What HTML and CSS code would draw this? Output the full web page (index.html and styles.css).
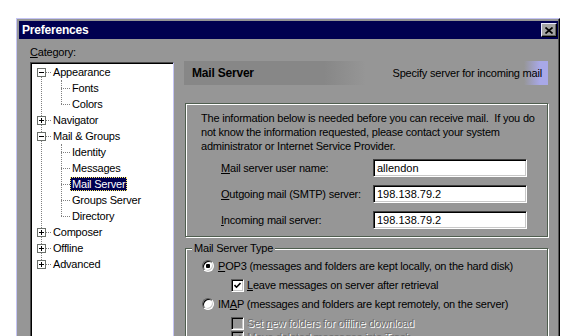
FILE: index.html
```html
<!DOCTYPE html>
<html lang="en">
<head>
    <meta charset="UTF-8">
    <meta name="viewport" content="width=device-width, initial-scale=1.0">
    <title>Preferences</title>
    <link rel="stylesheet" href="styles.css">
</head>
<body>
    <div class="window">
        <div class="titlebar">
            <span class="title">Preferences</span>
            <button class="close">
                <svg width="8" height="7" viewBox="0 0 8 7"><path d="M0.5 0.5l7 6M7.5 0.5l-7 6" stroke="#000" stroke-width="1.7"/></svg>
            </button>
        </div>
        <div class="content">
            <div class="sidebar">
                <div class="cat-label"><u>C</u>ategory:</div>
                <div class="tree-box">
                    <ul class="tree">
                        <li>
                            <div class="row"><span class="toggle"></span><span class="hline"></span><span class="label">Appearance</span></div>
                            <ul class="sub">
                                <li class="row child"><span class="hline"></span><span class="label">Fonts</span></li>
                                <li class="row child"><span class="hline"></span><span class="label">Colors</span></li>
                            </ul>
                        </li>
                        <li><div class="row"><span class="toggle closed"></span><span class="hline"></span><span class="label">Navigator</span></div></li>
                        <li>
                            <div class="row"><span class="toggle"></span><span class="hline"></span><span class="label">Mail &amp; Groups</span></div>
                            <ul class="sub">
                                <li class="row child"><span class="hline"></span><span class="label">Identity</span></li>
                                <li class="row child"><span class="hline"></span><span class="label">Messages</span></li>
                                <li class="row child"><span class="hline"></span><span class="label selected">Mail Server</span></li>
                                <li class="row child"><span class="hline"></span><span class="label">Groups Server</span></li>
                                <li class="row child"><span class="hline"></span><span class="label">Directory</span></li>
                            </ul>
                        </li>
                        <li><div class="row"><span class="toggle closed"></span><span class="hline"></span><span class="label">Composer</span></div></li>
                        <li><div class="row"><span class="toggle closed"></span><span class="hline"></span><span class="label">Offline</span></div></li>
                        <li><div class="row"><span class="toggle closed"></span><span class="hline"></span><span class="label">Advanced</span></div></li>
                    </ul>
                </div>
            </div>

            <div class="panel">
                <div class="panel-head">
                    <span class="panel-title">Mail Server</span>
                    <span class="panel-desc">Specify server for incoming mail</span>
                </div>

                <div class="group">
                    <p class="info">The information below is needed before you can receive mail.&nbsp; If you do<br>not know the information requested, please contact your system<br>administrator or Internet Service Provider.</p>
                    <div class="fields">
                        <div class="field"><label for="user"><u>M</u>ail server user name:</label><input id="user" type="text" value="allendon"></div>
                        <div class="field"><label for="smtp"><u>O</u>utgoing mail (SMTP) server:</label><input id="smtp" type="text" value="198.138.79.2"></div>
                        <div class="field"><label for="pop"><u>I</u>ncoming mail server:</label><input id="pop" type="text" value="198.138.79.2"></div>
                    </div>
                </div>

                <fieldset class="group type-group">
                    <legend>Mail Server Type</legend>
                    <div class="opt opt-pop"><span class="radio on"></span><span><u>P</u>OP3 (messages and folders are kept locally, on the hard disk)</span></div>
                    <div class="opt sub-opt"><span class="check"><svg width="7" height="7" viewBox="0 0 7 7"><path d="M0.5 3l2 2.2L6.5 1" stroke="#000" stroke-width="1.6" fill="none"/></svg></span><span><u>L</u>eave messages on server after retrieval</span></div>
                    <div class="opt"><span class="radio"></span><span>IM<u>A</u>P (messages and folders are kept remotely, on the server)</span></div>
                    <div class="opt sub-opt disabled"><span class="check"></span><span>Set <u>n</u>ew folders for offline download</span></div>
                    <div class="opt sub-opt disabled tight"><span class="check"><svg width="7" height="7" viewBox="0 0 7 7"><path d="M0.5 3l2 2.2L6.5 1" stroke="#6f6f6f" stroke-width="1.6" fill="none"/></svg></span><span>Move deleted messages into Trash</span></div>
                </fieldset>
            </div>
        </div>
    </div>
</body>
</html>
```

FILE: styles.css
```css
body {
    margin: 0;
    height: 336px;
    overflow: hidden;
    background: #fff;
    font-family: 'Liberation Sans', Arial, sans-serif;
    font-size: 11px;
    letter-spacing: -0.2px;
    color: #000;
}

.window {
    margin: 18px 0 0 16px;
    width: 544px;
    height: 340px;
    box-sizing: border-box;
    padding: 2px 1px 0 2px;
    background: #969696;
    border: 1px solid;
    border-color: #c4c4f4 #000 #000 #c4c4f4;
    box-shadow: inset -1px -1px #555;
}

.titlebar {
    height: 18px;
    background: #000050;
    display: flex;
    align-items: center;
    justify-content: space-between;
    padding: 0 1px 0 3px;
}

.title {
    color: #fff;
    font-weight: bold;
    font-size: 12px;
}

.close {
    width: 16px;
    height: 14px;
    padding: 0;
    display: flex;
    align-items: center;
    justify-content: center;
    background: #a4a4a4;
    border: 1px solid;
    border-color: #e8e8ff #000 #000 #e8e8ff;
    box-shadow: inset -1px -1px #666;
}

.content {
    display: flex;
    gap: 10px;
    padding: 0 9px 0 11px;
}

/* category tree */
.sidebar {
    width: 144px;
    flex: none;
}

.cat-label {
    margin-top: 6px;
    line-height: 14px;
}

.tree-box {
    margin-top: 3px;
    height: 300px;
    background: #fff;
    border: 1px solid;
    border-color: #4a4a4a #c4c4f4 #c4c4f4 #4a4a4a;
    box-shadow: inset 1px 1px #000;
    padding: 1px 0 0 1px;
}

.tree, .sub {
    list-style: none;
    margin: 0;
    padding: 0;
    position: relative;
}

.tree::before {
    content: "";
    position: absolute;
    left: 9px;
    top: 8px;
    height: 192px;
    border-left: 1px dotted #808080;
}

.sub::before {
    content: "";
    position: absolute;
    left: 29px;
    top: 0;
    height: calc(100% - 8px);
    border-left: 1px dotted #808080;
}

.row {
    display: flex;
    align-items: center;
    height: 16px;
    padding-left: 5px;
}

.row.child {
    padding-left: 29px;
}

.toggle {
    width: 9px;
    height: 9px;
    box-sizing: border-box;
    border: 1px solid #6a6f6a;
    background: #fff;
    position: relative;
    z-index: 1;
}

.toggle::before {
    content: "";
    position: absolute;
    left: 1px;
    top: 3px;
    width: 5px;
    height: 1px;
    background: #000;
}

.toggle.closed::after {
    content: "";
    position: absolute;
    left: 3px;
    top: 1px;
    width: 1px;
    height: 5px;
    background: #000;
}

.hline {
    width: 5px;
    border-top: 1px dotted #808080;
}

.child .hline {
    width: 9px;
}

.label {
    padding: 0 1px;
    border: 1px solid transparent;
    line-height: 12px;
}

.label.selected {
    background: #000050;
    color: #fff;
    border: 1px dotted #ffef60;
}

/* right side */
.panel {
    width: 364px;
    flex: none;
    padding-top: 22px;
}

.panel-head {
    height: 24px;
    display: flex;
    align-items: center;
    justify-content: space-between;
    padding: 0 6px 0 8px;
    background:
        linear-gradient(90deg, rgba(150,150,150,0) calc(100% - 24px), #a8a8e8 calc(100% - 8px)),
        linear-gradient(90deg, #878787 140px, #969696 182px);
}

.panel-title {
    font-weight: bold;
    font-size: 12px;
}

.group {
    margin: 18px 0 0 1px;
    border: 1px solid #4f5e4f;
    box-shadow: inset 1px 1px #fff, 1px 1px #fff;
    padding: 7px 0 7px 15px;
}

.info {
    margin: 0;
    line-height: 14px;
    white-space: nowrap;
}

.fields {
    margin: 6px 0 0 20px;
    display: flex;
    flex-direction: column;
    gap: 8px;
}

.field {
    display: flex;
    align-items: center;
    height: 18px;
}

.field label {
    width: 152px;
}

.field input {
    width: 154px;
    height: 18px;
    box-sizing: border-box;
    margin: 0;
    padding: 0 0 0 3px;
    font: inherit;
    color: #000;
    background: #fff;
    border: 1px solid;
    border-color: #404040 #fff #fff #404040;
    box-shadow: inset 1px 1px #000, inset -1px -1px #c8c8c8;
    outline: none;
}

/* mail server type */
.type-group {
    margin-top: 4px;
    padding: 0 0 20px 16px;
    min-width: 0;
}

.type-group legend {
    margin-left: -10px;
    padding: 0 2px;
    line-height: 14px;
    background: #969696;
}

.opt {
    display: flex;
    align-items: center;
    gap: 4px;
    line-height: 14px;
    margin-top: 5px;
    white-space: nowrap;
}

.opt-pop {
    margin-top: 4px;
}

.sub-opt {
    padding-left: 29px;
    gap: 3px;
}

.opt.tight {
    margin-top: 0;
}

.radio {
    width: 12px;
    height: 12px;
    box-sizing: border-box;
    border-radius: 50%;
    border: 1px solid;
    border-color: #5a5a5a #fff #fff #5a5a5a;
    box-shadow: inset 1px 1px #000, inset -1px -1px #c8c8c8;
    background: #fff;
}

.radio.on {
    background: radial-gradient(circle, #000 0 2px, #fff 2.5px);
}

.check {
    width: 13px;
    height: 13px;
    box-sizing: border-box;
    display: flex;
    align-items: center;
    justify-content: center;
    border: 1px solid;
    border-color: #5a5a5a #fff #fff #5a5a5a;
    box-shadow: inset 1px 1px #000, inset -1px -1px #c8c8c8;
    background: #fff;
}

.disabled {
    color: #707070;
    text-shadow: 1px 1px #fff;
}

.disabled .check {
    background: #969696;
}
```
